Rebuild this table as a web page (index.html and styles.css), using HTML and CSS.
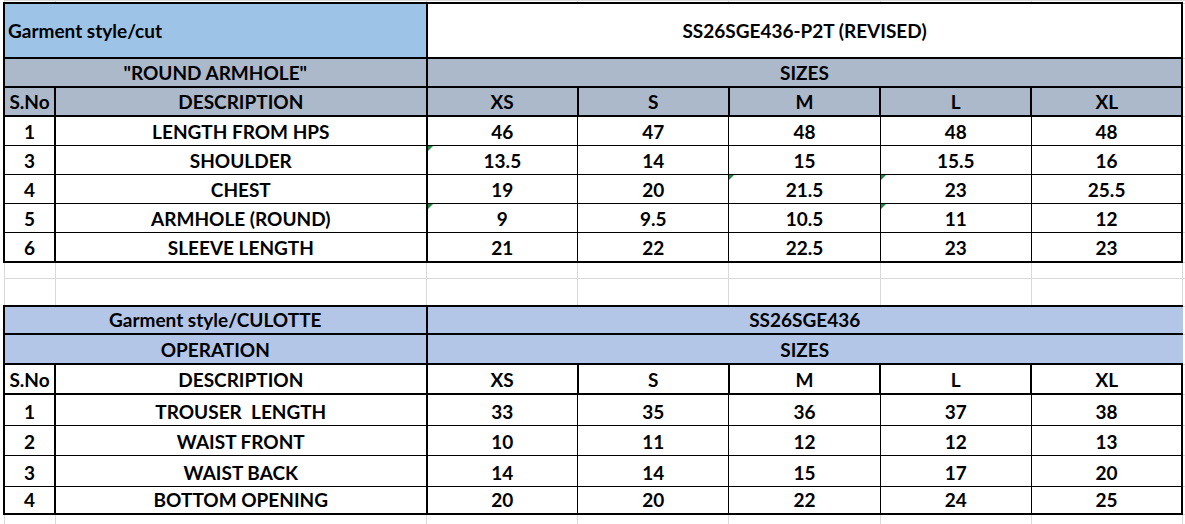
FILE: index.html
```html
<!DOCTYPE html>
<html>
<head>
<meta charset="utf-8">
<link rel="stylesheet" href="styles.css">
</head>
<body>
<table class="sheet">
  <colgroup>
    <col class="c-sno"><col class="c-desc"><col class="c-sz"><col class="c-sz"><col class="c-sz"><col class="c-sz"><col class="c-sz"><col class="c-pad">
  </colgroup>
  <tbody>
    <tr class="r-top"><td class="g"></td><td class="g"></td><td class="g"></td><td class="g"></td><td class="g"></td><td class="g"></td><td class="g"></td><td class="g"></td></tr>

    <tr class="r-title">
      <td colspan="2" class="t1-title thick">Garment style/cut</td>
      <td colspan="5" class="t1-code thick">SS26SGE436-P2T (REVISED)</td>
      <td class="g"></td>
    </tr>
    <tr class="r-hdr">
      <td colspan="2" class="gray thick">"ROUND ARMHOLE"</td>
      <td colspan="5" class="gray thick">SIZES</td>
      <td class="g"></td>
    </tr>
    <tr class="r-hdr">
      <td class="gray thick">S.No</td>
      <td class="gray thick">DESCRIPTION</td>
      <td class="gray thick">XS</td>
      <td class="gray thick">S</td>
      <td class="gray thick">M</td>
      <td class="gray thick">L</td>
      <td class="gray thick">XL</td>
      <td class="g"></td>
    </tr>
    <tr class="r-row">
      <td class="d sno">1</td><td class="d desc">LENGTH FROM HPS</td>
      <td class="d first">46</td><td class="d">47</td><td class="d">48</td><td class="d">48</td><td class="d last">48</td><td class="g"></td>
    </tr>
    <tr class="r-row">
      <td class="d sno">3</td><td class="d desc">SHOULDER</td>
      <td class="d first tri">13.5</td><td class="d">14</td><td class="d">15</td><td class="d">15.5</td><td class="d last">16</td><td class="g"></td>
    </tr>
    <tr class="r-row">
      <td class="d sno">4</td><td class="d desc">CHEST</td>
      <td class="d first">19</td><td class="d">20</td><td class="d tri">21.5</td><td class="d tri">23</td><td class="d last">25.5</td><td class="g"></td>
    </tr>
    <tr class="r-row">
      <td class="d sno">5</td><td class="d desc">ARMHOLE (ROUND)</td>
      <td class="d first tri">9</td><td class="d">9.5</td><td class="d">10.5</td><td class="d tri">11</td><td class="d last">12</td><td class="g"></td>
    </tr>
    <tr class="r-row-end end">
      <td class="d sno">6</td><td class="d desc">SLEEVE LENGTH</td>
      <td class="d first">21</td><td class="d">22</td><td class="d">22.5</td><td class="d">23</td><td class="d last">23</td><td class="g"></td>
    </tr>

    <tr class="r-gap1"><td class="g"></td><td class="g"></td><td class="g"></td><td class="g"></td><td class="g"></td><td class="g"></td><td class="g"></td><td class="g"></td></tr>
    <tr class="r-gap2"><td class="g"></td><td class="g"></td><td class="g"></td><td class="g"></td><td class="g"></td><td class="g"></td><td class="g"></td><td class="g"></td></tr>

    <tr class="r-t2a">
      <td colspan="2" class="blue thick">Garment style/CULOTTE</td>
      <td colspan="5" class="blue thick open-r">SS26SGE436</td>
      <td class="g"></td>
    </tr>
    <tr class="r-t2b">
      <td colspan="2" class="blue thick">OPERATION</td>
      <td colspan="5" class="blue thick open-r">SIZES</td>
      <td class="g"></td>
    </tr>
    <tr class="r-t2b">
      <td class="thick">S.No</td>
      <td class="thick">DESCRIPTION</td>
      <td class="thick">XS</td>
      <td class="thick">S</td>
      <td class="thick">M</td>
      <td class="thick">L</td>
      <td class="thick">XL</td>
      <td class="g"></td>
    </tr>
    <tr class="r-d2a">
      <td class="d sno">1</td><td class="d desc">TROUSER&nbsp; LENGTH</td>
      <td class="d first">33</td><td class="d">35</td><td class="d">36</td><td class="d">37</td><td class="d last">38</td><td class="g"></td>
    </tr>
    <tr class="r-d2b">
      <td class="d sno">2</td><td class="d desc">WAIST FRONT</td>
      <td class="d first">10</td><td class="d">11</td><td class="d">12</td><td class="d">12</td><td class="d last">13</td><td class="g"></td>
    </tr>
    <tr class="r-d2a">
      <td class="d sno">3</td><td class="d desc">WAIST BACK</td>
      <td class="d first">14</td><td class="d">14</td><td class="d">15</td><td class="d">17</td><td class="d last">20</td><td class="g"></td>
    </tr>
    <tr class="r-d2c end">
      <td class="d sno">4</td><td class="d desc">BOTTOM OPENING</td>
      <td class="d first">20</td><td class="d">20</td><td class="d">22</td><td class="d">24</td><td class="d last">25</td><td class="g"></td>
    </tr>
    <tr class="r-bottom"><td class="g"></td><td class="g"></td><td class="g"></td><td class="g"></td><td class="g"></td><td class="g"></td><td class="g"></td><td class="g"></td></tr>
  </tbody>
</table>
</body>
</html>
```

FILE: styles.css
```css
html, body {
  margin: 0;
  padding: 0;
  background: #ffffff;
  overflow: hidden;
}

.sheet {
  margin-left: 3px;
  margin-top: 0;
  border-collapse: collapse;
  table-layout: fixed;
  width: 1190px;
  font-family: Lato, "Liberation Sans", sans-serif;
  font-weight: 700;
  font-size: 19px;
  color: #000000;
}

.c-sno { width: 51px; }
.c-desc { width: 371px; }
.c-sz { width: 151px; }
.c-pad { width: 10px; }

.sheet td {
  padding: 0 2px 2px 2px;
  text-align: center;
  vertical-align: bottom;
  line-height: 22px;
  white-space: nowrap;
  overflow: visible;
}

.sheet td.g {
  border: 1px solid #d9d9d9;
  padding: 0;
}

.r-top td { height: 1px; border-top: none; }
.r-title td { height: 53px; }
.r-hdr td { height: 25px; }
.r-row td { height: 26px; }
.r-row-end td { height: 26px; }
.r-gap1 td { height: 15px; }
.r-gap2 td { height: 26px; }
.r-t2a td { height: 24px; }
.r-t2b td { height: 26px; }
.r-d2a td { height: 28px; }
.r-d2b td { height: 27px; }
.r-d2c td { height: 24px; }
.r-bottom td { height: 12px; border-bottom: none; }

.thick {
  border: 2px solid #000000;
}

.t1-title {
  background: #9dc3e6;
  text-align: left !important;
  vertical-align: middle !important;
  padding: 0 0 0 3px !important;
}

.t1-code {
  background: #ffffff;
  vertical-align: middle !important;
  padding: 0 !important;
}

.gray { background: #acb9ca; }
.blue { background: #b4c6e7; }

.sheet td.open-r {
  border-right: 1px solid #b4c6e7;
}

.d {
  border: 1px solid #000000;
  background: #ffffff;
}

.d.sno { border-left: 2px solid #000000; border-right: 2px solid #000000; }
.d.desc { border-right: 2px solid #000000; }
.d.first { border-left: 2px solid #000000; }
.d.last { border-right: 2px solid #000000; }
.end .d { border-bottom: 2px solid #000000; }

.tri { position: relative; }
.tri::before {
  content: "";
  position: absolute;
  left: 0;
  top: 0;
  width: 0;
  height: 0;
  border-top: 5px solid #1f8a3a;
  border-right: 5px solid transparent;
}
```
